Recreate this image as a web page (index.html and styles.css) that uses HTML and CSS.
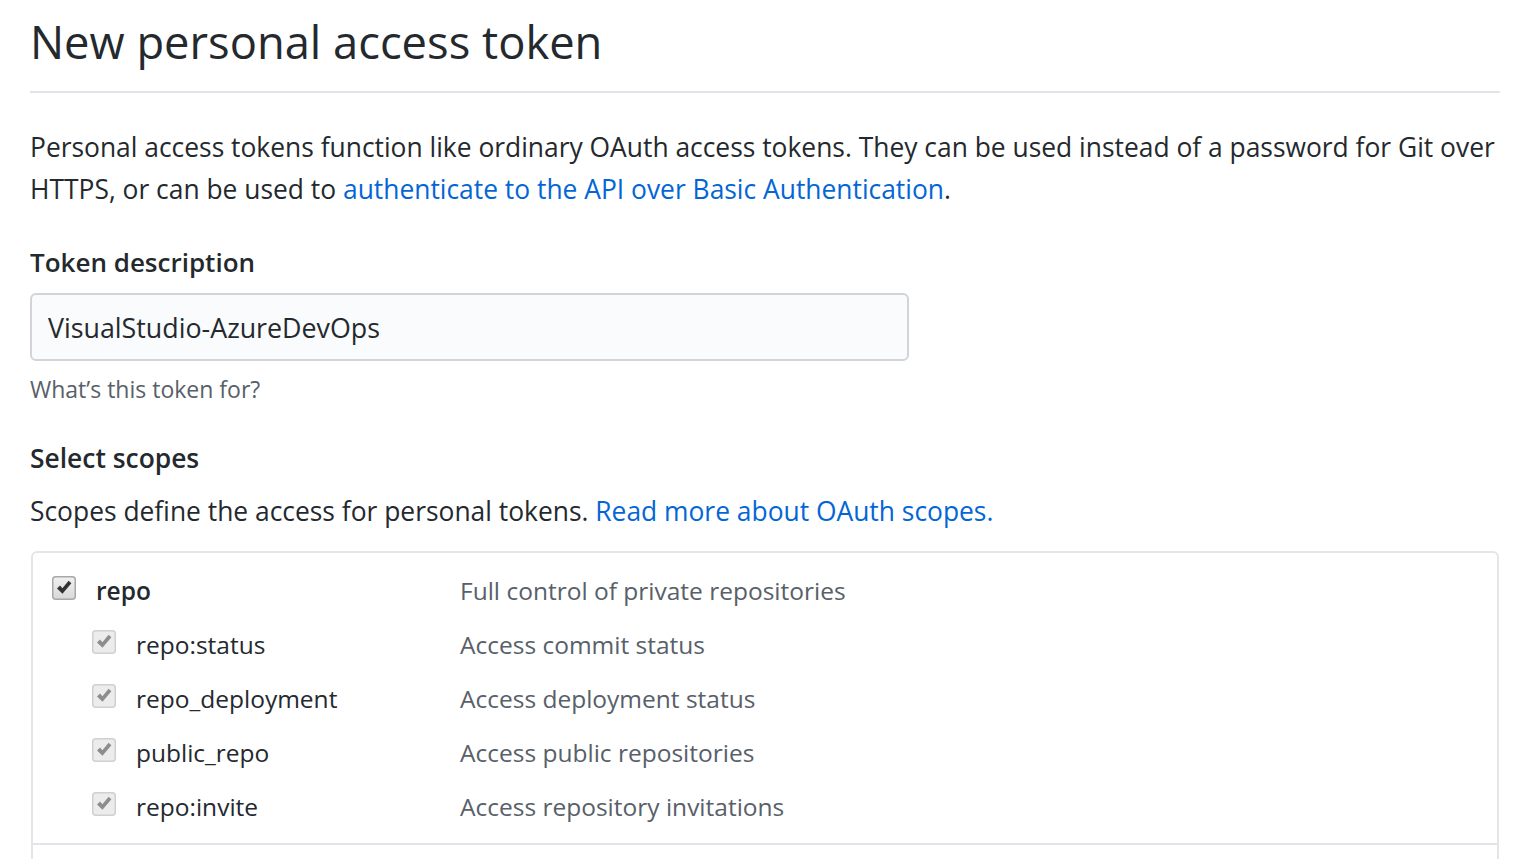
FILE: index.html
```html
<!DOCTYPE html>
<html lang="en">
<head>
<meta charset="utf-8">
<title>New personal access token</title>
<link rel="stylesheet" href="styles.css">
</head>
<body>
<div class="page">
  <div class="subhead">
    <h2 class="subhead-heading">New personal access token</h2>
  </div>
  <p class="intro">Personal access tokens function like ordinary OAuth access tokens. They can be used instead of a password for Git over HTTPS, or can be used to <a href="#">authenticate to the API over Basic Authentication</a>.</p>

  <dl class="form-group">
    <dt><label for="desc">Token description</label></dt>
    <dd>
      <input id="desc" class="form-control" type="text" value="VisualStudio-AzureDevOps">
      <p class="note">What’s this token for?</p>
    </dd>
  </dl>

  <h3 class="scopes-title">Select scopes</h3>
  <p class="scopes-text">Scopes define the access for personal tokens. <a href="#">Read more about OAuth scopes.</a></p>

  <div class="scopes-box">
    <div class="scope-group">
      <div class="scope-row main">
        <span class="cb">
          <svg viewBox="0 0 24 24" width="24" height="24"><defs><linearGradient id="g1" x1="0" y1="0" x2="0" y2="1"><stop offset="0" stop-color="#f0f0f0"/><stop offset="1" stop-color="#d9d9d9"/></linearGradient></defs><rect x="0.75" y="0.75" width="22.5" height="22.5" rx="3" fill="url(#g1)" stroke="#a8a8a8" stroke-width="1.5"/><path d="M5 12.4 L8 9.6 L10.4 12.3 L16.6 4.8 L19.4 7.3 L10.5 17.8 Z" fill="#333"/></svg>
        </span>
        <span class="scope-name strong">repo</span>
        <span class="scope-desc">Full control of private repositories</span>
      </div>
      <div class="scope-row sub">
        <span class="cb"><svg viewBox="0 0 24 24" width="24" height="24"><rect x="0.75" y="0.75" width="22.5" height="22.5" rx="3" fill="#ececec" stroke="#d0d0d0" stroke-width="1.5"/><path d="M5 12.4 L8 9.6 L10.4 12.3 L16.6 4.8 L19.4 7.3 L10.5 17.8 Z" fill="#8d8d8d"/></svg></span>
        <span class="scope-name">repo:status</span>
        <span class="scope-desc">Access commit status</span>
      </div>
      <div class="scope-row sub">
        <span class="cb"><svg viewBox="0 0 24 24" width="24" height="24"><rect x="0.75" y="0.75" width="22.5" height="22.5" rx="3" fill="#ececec" stroke="#d0d0d0" stroke-width="1.5"/><path d="M5 12.4 L8 9.6 L10.4 12.3 L16.6 4.8 L19.4 7.3 L10.5 17.8 Z" fill="#8d8d8d"/></svg></span>
        <span class="scope-name">repo_deployment</span>
        <span class="scope-desc">Access deployment status</span>
      </div>
      <div class="scope-row sub">
        <span class="cb"><svg viewBox="0 0 24 24" width="24" height="24"><rect x="0.75" y="0.75" width="22.5" height="22.5" rx="3" fill="#ececec" stroke="#d0d0d0" stroke-width="1.5"/><path d="M5 12.4 L8 9.6 L10.4 12.3 L16.6 4.8 L19.4 7.3 L10.5 17.8 Z" fill="#8d8d8d"/></svg></span>
        <span class="scope-name">public_repo</span>
        <span class="scope-desc">Access public repositories</span>
      </div>
      <div class="scope-row sub">
        <span class="cb"><svg viewBox="0 0 24 24" width="24" height="24"><rect x="0.75" y="0.75" width="22.5" height="22.5" rx="3" fill="#ececec" stroke="#d0d0d0" stroke-width="1.5"/><path d="M5 12.4 L8 9.6 L10.4 12.3 L16.6 4.8 L19.4 7.3 L10.5 17.8 Z" fill="#8d8d8d"/></svg></span>
        <span class="scope-name">repo:invite</span>
        <span class="scope-desc">Access repository invitations</span>
      </div>
    </div>
    <div class="scope-group next"></div>
  </div>
</div>
</body>
</html>
```

FILE: styles.css
```css
* { box-sizing: border-box; }

html, body {
  margin: 0;
  padding: 0;
  background: #ffffff;
}

body {
  font-family: "Open Sans", "Noto Sans", "Liberation Sans", sans-serif;
  color: #24292e;
  font-size: 26.4px;
  line-height: 42px;
}

a {
  color: #0366d6;
  text-decoration: none;
}

.page {
  padding: 0 25px 0 30px;
}

.subhead {
  border-bottom: 2px solid #e1e4e8;
  padding-top: 10px;
  padding-bottom: 17px;
  margin-bottom: 33px;
}

.subhead-heading {
  margin: 0;
  font-size: 45.3px;
  font-weight: 400;
  line-height: 64px;
}

.intro {
  margin: 0;
}

.form-group {
  margin: 31px 0 0 0;
}

.form-group dt {
  margin: 0 0 10px 0;
}

.form-group dt label {
  font-weight: 600;
  font-size: 26px;
}

.form-group dd {
  margin: 0;
}

.form-control {
  display: block;
  width: 879px;
  height: 68px;
  padding: 0 16px;
  font-family: inherit;
  font-size: 26.8px;
  color: #24292e;
  background: #fafbfc;
  border: 2px solid #d1d5da;
  border-radius: 6px;
  outline: none;
}

.note {
  margin: 10px 0 0 0;
  font-size: 23px;
  line-height: 36px;
  color: #586069;
}

.scopes-title {
  margin: 30px 0 0 0;
  font-size: 26.4px;
  font-weight: 600;
  line-height: 42px;
}

.scopes-text {
  margin: 11px 0 0 0;
}

.scopes-box {
  margin-top: 19px;
  margin-left: 1px;
  border: 2px solid #e5e5e5;
  border-radius: 6px;
  width: 1468px;
  font-size: 24.5px;
}

.scope-group {
  padding: 11px 0 9px 0;
}

.scope-group.next {
  border-top: 2px solid #e1e4e8;
  height: 80px;
}

.scope-row {
  display: flex;
  align-items: center;
  height: 54px;
}

.scope-row .cb {
  display: flex;
  width: 24px;
  height: 24px;
  margin-top: -7px;
  flex: none;
}

.scope-row.main {
  padding-left: 19px;
}

.scope-row.sub {
  padding-left: 59px;
}

.scope-row .cb {
  margin-right: 20px;
}

.scope-name {
  flex: none;
}

.scope-row.main .scope-name {
  width: 364px;
}

.scope-row.sub .scope-name {
  width: 324px;
}

.scope-name.strong {
  font-weight: 600;
}

.scope-desc {
  color: #586069;
}
```
